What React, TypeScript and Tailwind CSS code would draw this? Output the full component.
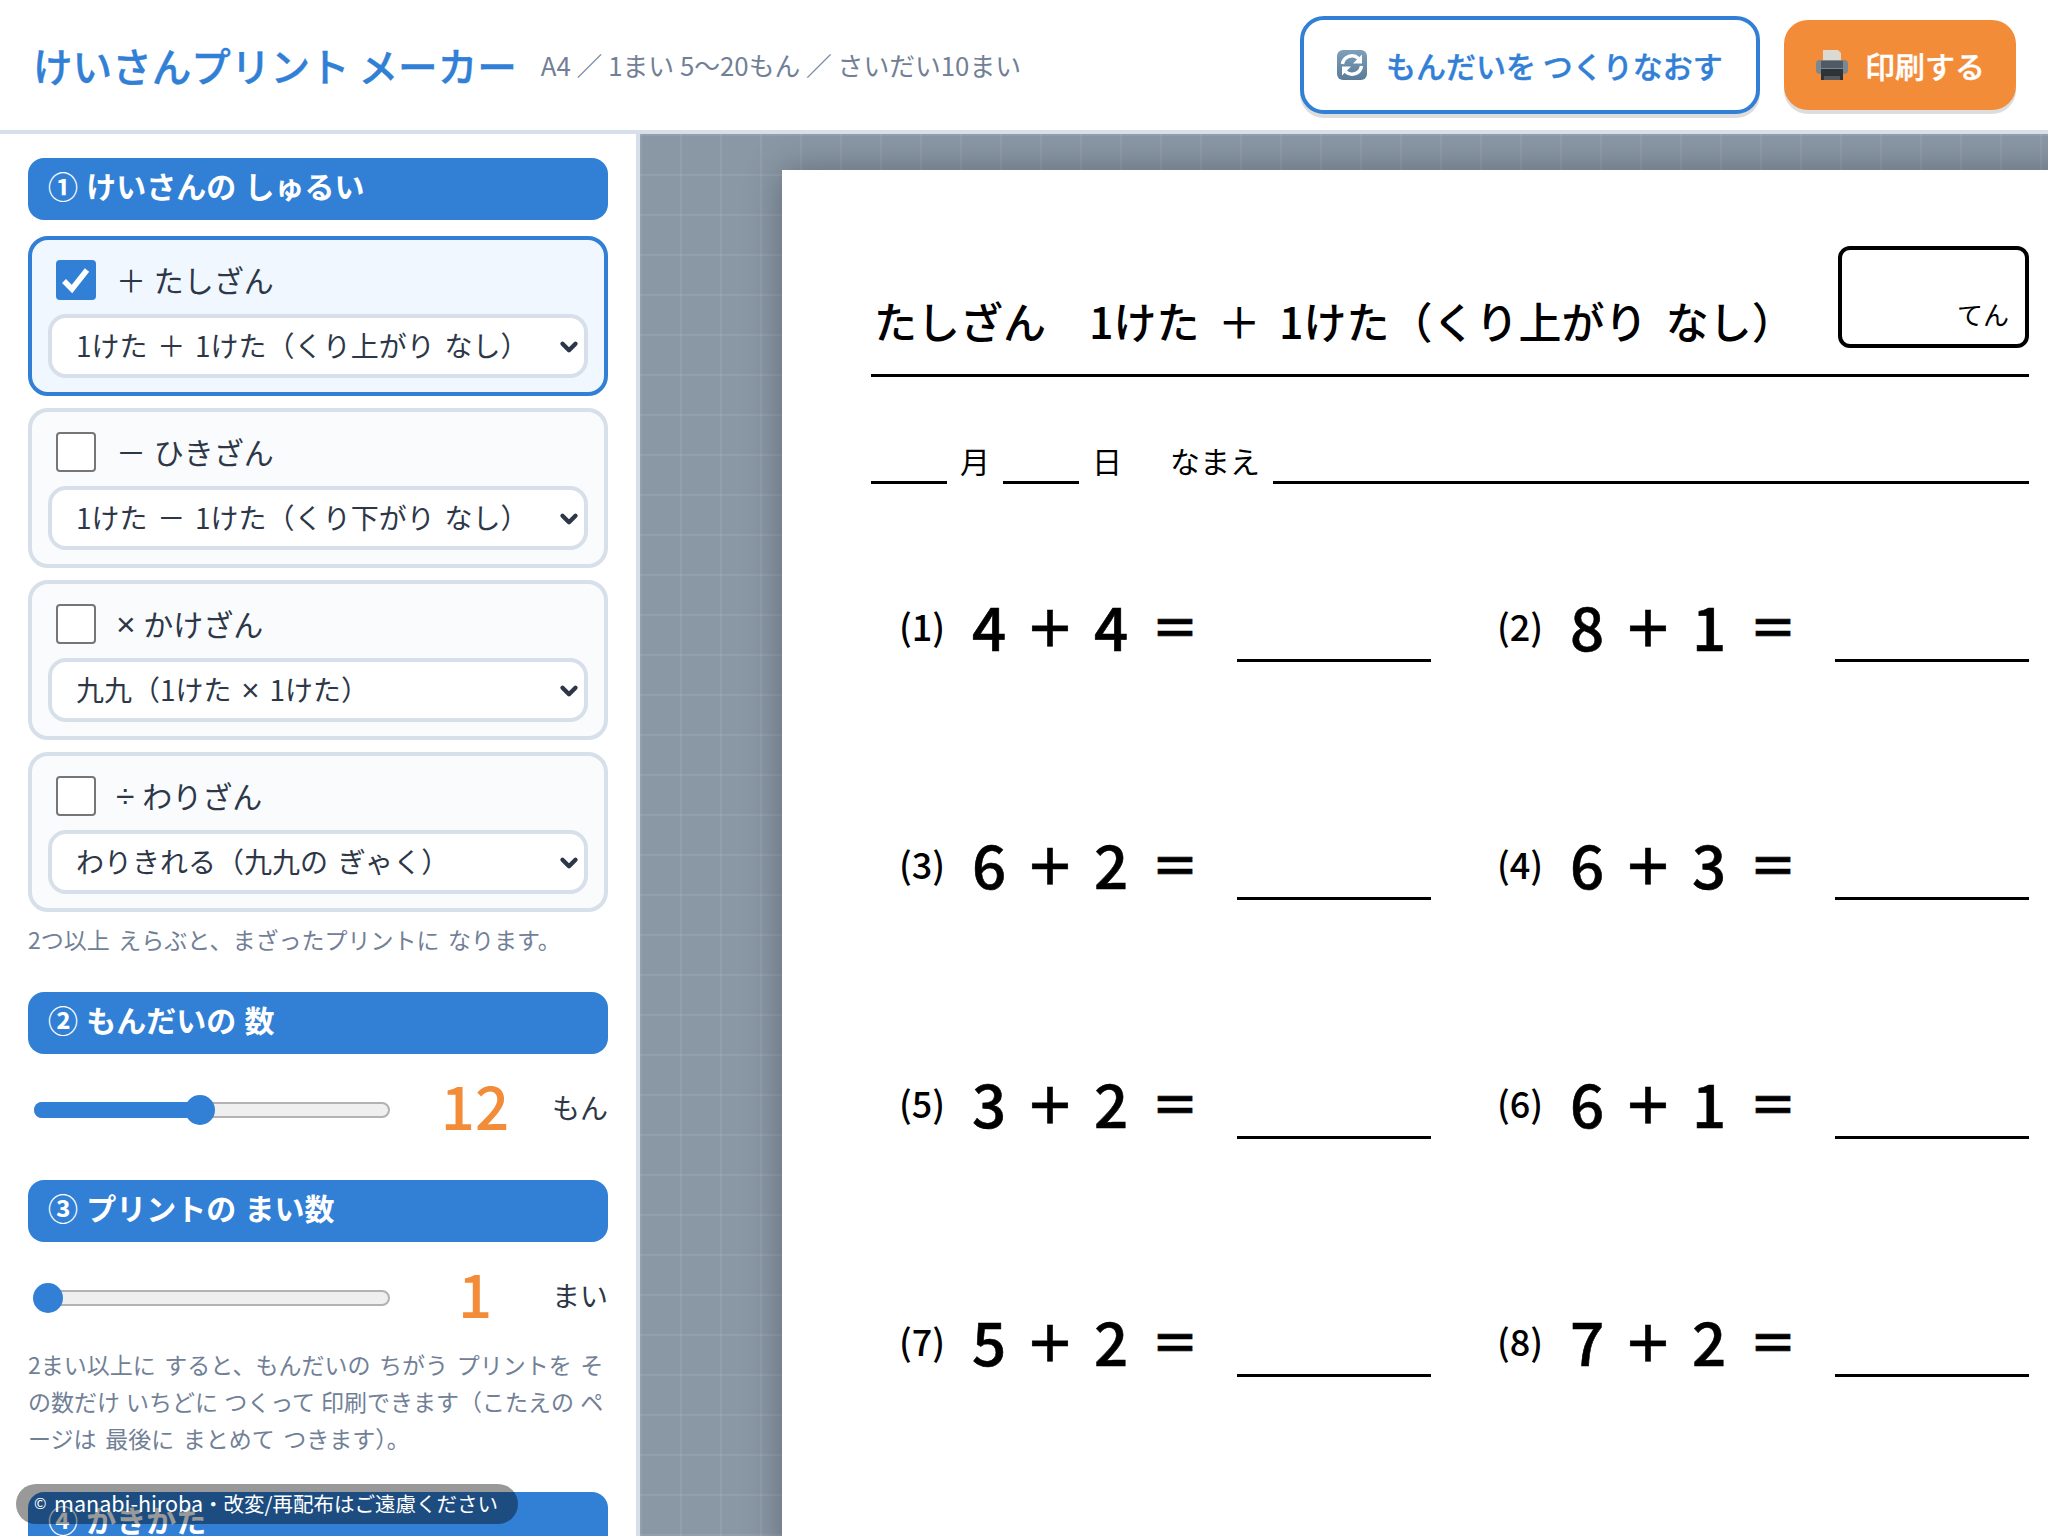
import type { ReactNode } from "react";
import { ChevronDown } from "lucide-react";

function Sym({ children }: { children: string }) {
  return <span className="font-['Liberation_Sans',sans-serif] text-[1.12em] leading-[0]">{children}</span>;
}

const kinds: { label: ReactNode; option: ReactNode; on: boolean }[] = [
  { label: "＋ たしざん", option: "1けた ＋ 1けた（くり上がり なし）", on: true },
  { label: "－ ひきざん", option: "1けた － 1けた（くり下がり なし）", on: false },
  {
    label: (
      <>
        <Sym>×</Sym> かけざん
      </>
    ),
    option: (
      <>
        九九（1けた <Sym>×</Sym> 1けた）
      </>
    ),
    on: false,
  },
  {
    label: (
      <>
        <Sym>÷</Sym> わりざん
      </>
    ),
    option: "わりきれる（九九の ぎゃく）",
    on: false,
  },
];

const problems = [
  ["4", "4"],
  ["8", "1"],
  ["6", "2"],
  ["6", "3"],
  ["3", "2"],
  ["6", "1"],
  ["5", "2"],
  ["7", "2"],
];

function RefreshEmoji() {
  return (
    <svg width="32" height="32" viewBox="0 0 32 32" className="shrink-0">
      <defs>
        <linearGradient id="refreshBg" x1="0" y1="0" x2="0" y2="1">
          <stop offset="0" stopColor="#7f9fba" />
          <stop offset="1" stopColor="#5a7c99" />
        </linearGradient>
      </defs>
      <rect x="1" y="1" width="30" height="30" rx="6" fill="url(#refreshBg)" />
      <path d="M6.5 15a9.5 9.5 0 0 1 16-5.500" fill="none" stroke="#fff" strokeWidth="3.500" />
      <path d="M26 5.500v9h-9z" fill="#fff" />
      <path d="M25.500 17a9.500 9.500 0 0 1-16 5.500" fill="none" stroke="#fff" strokeWidth="3.500" />
      <path d="M6 26.500v-9h9z" fill="#fff" />
    </svg>
  );
}

function PrinterEmoji() {
  return (
    <svg width="34" height="32" viewBox="0 0 34 32" className="shrink-0">
      <path d="M8 1h15l3 3v9H8z" fill="#dcd9d2" />
      <rect x="1" y="11" width="32" height="14" rx="4" fill="#7d8790" />
      <rect x="6" y="12" width="22" height="7" fill="#4f5a64" />
      <rect x="6" y="20" width="22" height="11" fill="#2e3338" />
      <rect x="9" y="27" width="16" height="4" fill="#55595d" />
    </svg>
  );
}

function SectionTitle({ children }: { children: string }) {
  return (
    <div className="flex h-[62px] shrink-0 items-center rounded-[16px] bg-[#3180d6] px-5 pb-2 text-[30px] font-bold text-white [word-spacing:1.5px]">
      {children}
    </div>
  );
}

function KindCard({ label, option, on }: { label: ReactNode; option: ReactNode; on: boolean }) {
  return (
    <div
      className={
        on
          ? "flex h-[160px] shrink-0 flex-col rounded-[20px] border-4 border-[#3180d6] bg-[#f0f7ff] px-4 pt-5"
          : "flex h-[160px] shrink-0 flex-col rounded-[20px] border-4 border-[#d7e0ea] bg-[#f9fbfd] px-4 pt-5"
      }
    >
      <div className="flex h-10 items-center gap-5 pl-2 text-[30px] leading-none text-[#2d3748]">
        {on ? (
          <span className="flex h-10 w-10 items-center justify-center rounded-[4px] bg-[#3180d6]">
            <svg width="30" height="30" viewBox="0 0 30 30">
              <path d="M3 16l8 8L26 5" fill="none" stroke="#fff" strokeWidth="5.5" />
            </svg>
          </span>
        ) : (
          <span className="h-10 w-10 rounded-[4px] border-2 border-[#767676] bg-white" />
        )}
        <span className="pb-[3px] [word-spacing:1px]">{label}</span>
      </div>
      <div className="relative mt-[14px] flex h-16 items-center rounded-[18px] border-4 border-[#d7e0ea] bg-white pb-[3px] pl-[24px] text-[28px] text-[#2d3748] [word-spacing:.125em]">
        <span>{option}</span>
        <ChevronDown
          size={26}
          strokeWidth={4}
          className="pointer-events-none absolute right-[2px] top-[16px] text-[#2d3748]"
        />
      </div>
    </div>
  );
}

function SliderRow({ percent, value, unit }: { percent: number; value: string; unit: string }) {
  return (
    <div className="flex h-[112px] shrink-0 items-center">
      <div className="relative ml-[6px] h-4 w-[356px] rounded-full border-2 border-[#b2b2b2] bg-[#efefef]">
        <div className="absolute -left-[2px] -top-[2px] h-4 rounded-full bg-[#3180d6]" style={{ width: `${percent}%` }} />
        <div
          className="absolute -top-[9px] h-[30px] w-[30px] -translate-x-1/2 rounded-full bg-[#3180d6]"
          style={{ left: `${percent}%` }}
        />
      </div>
      <div className="flex-1 pb-[13px] pl-[8px] text-center text-[60px] font-medium leading-none text-[#f28c38]">{value}</div>
      <div className="pb-[7px] text-[28px] text-[#2d3748]">{unit}</div>
    </div>
  );
}

function Problem({ n, a, b }: { n: number; a: string; b: string }) {
  return (
    <div className="flex h-[238.3px] items-start pl-[28px] pt-[36px] text-black">
      <span className="mt-[14px] w-[73px] text-[36px] font-medium leading-[44px]">({n})</span>
      <span className="flex h-[72px] w-[265px] items-center text-[60px] font-medium leading-[72px] [-webkit-text-stroke:0.6px_black]">
        <span className="w-[34px] text-center">{a}</span>
        <span className="ml-[19px] mr-[19px] w-[50px] text-[50px] font-bold">＋</span>
        <span className="w-[34px] text-center">{b}</span>
        <span className="ml-[23px] w-[48px] text-[48px] font-bold">＝</span>
      </span>
      <span className="mt-[70px] h-[3px] flex-1 bg-black" />
    </div>
  );
}

export default function App() {
  return (
    <div className="relative flex h-[1536px] w-[2048px] flex-col overflow-hidden bg-white font-['Noto_Sans_CJK_JP',sans-serif]">
      <header className="flex h-[134px] shrink-0 items-center border-b-4 border-[#d7e0ea] bg-white pl-[33px] pr-[32px]">
        <h1 className="text-[39.6px] font-medium text-[#3180d6] [-webkit-text-stroke:0.4px_#3180d6]">けいさんプリント メーカー</h1>
        <span className="ml-[24px] text-[25.8px] text-[#718096]">A4 ／ 1まい 5〜20もん ／ さいだい10まい</span>
        <div className="ml-auto flex items-center gap-6">
          <button className="flex h-[98px] w-[460px] items-center gap-[18px] rounded-[24px] border-4 border-[#3180d6] bg-white pl-8 text-[30px] font-medium text-[#3180d6] shadow-[0_4px_0_#dddddd] [-webkit-text-stroke:0.4px_#3180d6]">
            <RefreshEmoji />
            もんだいを つくりなおす
          </button>
          <button className="flex h-[90px] w-[232px] items-center gap-[16px] rounded-[24px] bg-[#f28c38] pl-[31px] text-[30px] font-medium text-white shadow-[0_4px_0_#dddddd] [-webkit-text-stroke:0.4px_white]">
            <PrinterEmoji />
            印刷する
          </button>
        </div>
      </header>

      <div className="flex min-h-0 flex-1">
        <aside className="flex w-[640px] shrink-0 flex-col overflow-hidden border-r-4 border-[#d7e0ea] bg-white px-7 pt-6">
          <SectionTitle>① けいさんの しゅるい</SectionTitle>
          <div className="mt-4 flex shrink-0 flex-col gap-3">
            {kinds.map((k, i) => (
              <KindCard key={i} {...k} />
            ))}
          </div>
          <p className="mt-[9px] shrink-0 text-[23px] leading-[37px] text-[#718096] [word-spacing:.15em]">2つ以上 えらぶと、まざったプリントに なります。</p>
          <div className="mt-[34px] shrink-0">
            <SectionTitle>② もんだいの 数</SectionTitle>
          </div>
          <SliderRow percent={46.5} value="12" unit="もん" />
          <div className="mt-[14px] shrink-0">
            <SectionTitle>③ プリントの まい数</SectionTitle>
          </div>
          <SliderRow percent={3.5} value="1" unit="まい" />
          <p className="-mt-[8px] shrink-0 whitespace-nowrap text-[23px] leading-[37px] text-[#718096] [word-spacing:.15em]">
            2まい以上に すると、もんだいの ちがう プリントを そ
            <br />
            <span className="[word-spacing:.04em]">の数だけ いちどに つくって 印刷できます（こたえの ペ</span>
            <br />
            ージは 最後に まとめて つきます）。
          </p>
          <div className="mt-[35px] shrink-0">
            <SectionTitle>④ かきかた</SectionTitle>
          </div>
        </aside>

        <main className="min-w-0 flex-1 overflow-hidden bg-[#8a98a6] bg-[linear-gradient(rgba(255,255,255,.07)_2px,transparent_2px),linear-gradient(90deg,rgba(255,255,255,.07)_2px,transparent_2px)] bg-[size:40px_40px]">
          <div className="ml-[142px] mt-9 min-h-[1400px] w-[1336px] bg-white px-[89px] pt-[76px] shadow-[0_0_36px_rgba(0,0,0,.3)]">
            <div className="flex items-end justify-between border-b-[3px] border-black pb-[26px]">
              <h2 className="pl-[3px] text-[43px] font-medium leading-[56px] text-black [word-spacing:.2em]">たしざん　1けた ＋ 1けた（くり上がり なし）</h2>
              <div className="flex h-[102px] w-[191px] items-end justify-end rounded-[12px] border-4 border-black px-[16px] pb-[12px] text-[26px] leading-[36px] text-black">
                てん
              </div>
            </div>
            <div className="mt-[65px] flex h-[42px] items-end text-[30px] leading-[42px] text-black">
              <span className="h-[3px] w-[76px] bg-black" />
              <span className="mx-[13px] mb-[3px]">月</span>
              <span className="h-[3px] w-[76px] bg-black" />
              <span className="mx-[13px] mb-[3px]">日</span>
              <span className="mb-[3px] ml-[35px] mr-[13px]">なまえ</span>
              <span className="h-[3px] flex-1 bg-black" />
            </div>
            <div className="mt-[69px] grid grid-cols-2 gap-x-[38px]">
              {problems.map(([a, b], i) => (
                <Problem key={i} n={i + 1} a={a} b={b} />
              ))}
            </div>
          </div>
        </main>
      </div>

      <div className="absolute bottom-[12px] left-[16px] flex h-[40px] w-[502px] items-center whitespace-nowrap rounded-[20px] bg-black/40 pb-[2px] pl-[18px] text-[20.5px] text-white">
        <span className="w-[20px] text-[15px]">©</span>
        <span className="text-[21.5px]">manabi-hiroba</span>
        <span>・改変/再配布はご遠慮ください</span>
      </div>
    </div>
  );
}
